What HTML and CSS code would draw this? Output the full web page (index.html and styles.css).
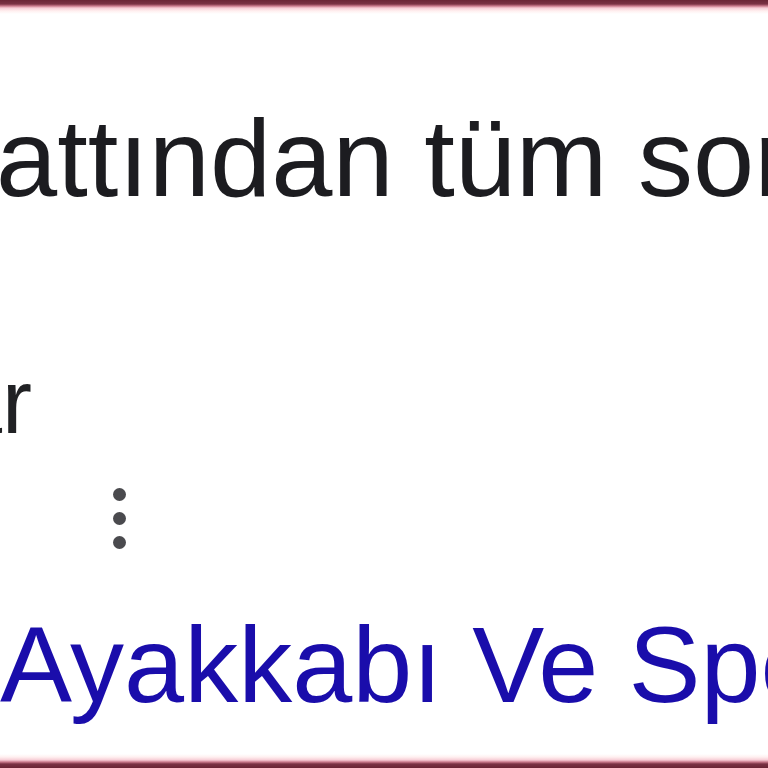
FILE: index.html
```html
<!DOCTYPE html>
<html lang="tr">
<head>
    <meta charset="UTF-8">
    <meta name="viewport" content="width=device-width, initial-scale=1.0">
    <title>Arama sonucu</title>
    <link rel="stylesheet" href="styles.css">
</head>
<body>
    <div class="page">
        <div class="edge top"></div>

        <div class="result">
            <p class="sitelink">attından tüm sonuçları görün</p>
            <p class="meta"><span class="cut">ar</span></p>
            <div class="more">
                <span class="dot"></span>
                <span class="dot"></span>
                <span class="dot"></span>
            </div>
            <a class="title" href="#">Ayakkabı Ve Spor Giyim</a>
        </div>

        <div class="edge bottom"></div>
    </div>
</body>
</html>
```

FILE: styles.css
```css
* {
    margin: 0;
    padding: 0;
}
html, body {
    width: 100%;
    height: 100%;
    background: #fff;
    overflow: hidden;
}
.page {
    display: flex;
    flex-direction: column;
    height: 768px;
    font-family: "Liberation Sans", Arial, sans-serif;
}
.edge {
    height: 14px;
    flex-shrink: 0;
}
.edge.top {
    background: linear-gradient(to bottom, #6a2535 0, #7a3244 4px, #c9798b 6px, #f7cdd6 8px, #fff0f0 11px, #fff 14px);
}
.edge.bottom {
    margin-top: auto;
    background: linear-gradient(to top, #6a2535 0, #7a3244 4px, #c9798b 6px, #f7cdd6 8px, #fff0f0 11px, #fff 14px);
}
.result {
    display: flex;
    flex-direction: column;
    white-space: nowrap;
    overflow: hidden;
}
.sitelink {
    margin-top: 82px;
    margin-left: -4px;
    font-size: 110px;
    line-height: 123px;
    color: #1c1c20;
}
.meta {
    margin-top: 133px;
    font-size: 90px;
    line-height: 100px;
    color: #202124;
}
.cut {
    display: inline-block;
    margin-left: -48px;
}
.more {
    display: flex;
    flex-direction: column;
    gap: 11px;
    margin-top: 36px;
    margin-left: 113px;
}
.dot {
    width: 13px;
    height: 13px;
    border-radius: 50%;
    background: #4a4a4e;
}
.title {
    margin-top: 54px;
    font-size: 108px;
    line-height: 123px;
    color: #1a0dab;
    text-decoration: none;
}
```
